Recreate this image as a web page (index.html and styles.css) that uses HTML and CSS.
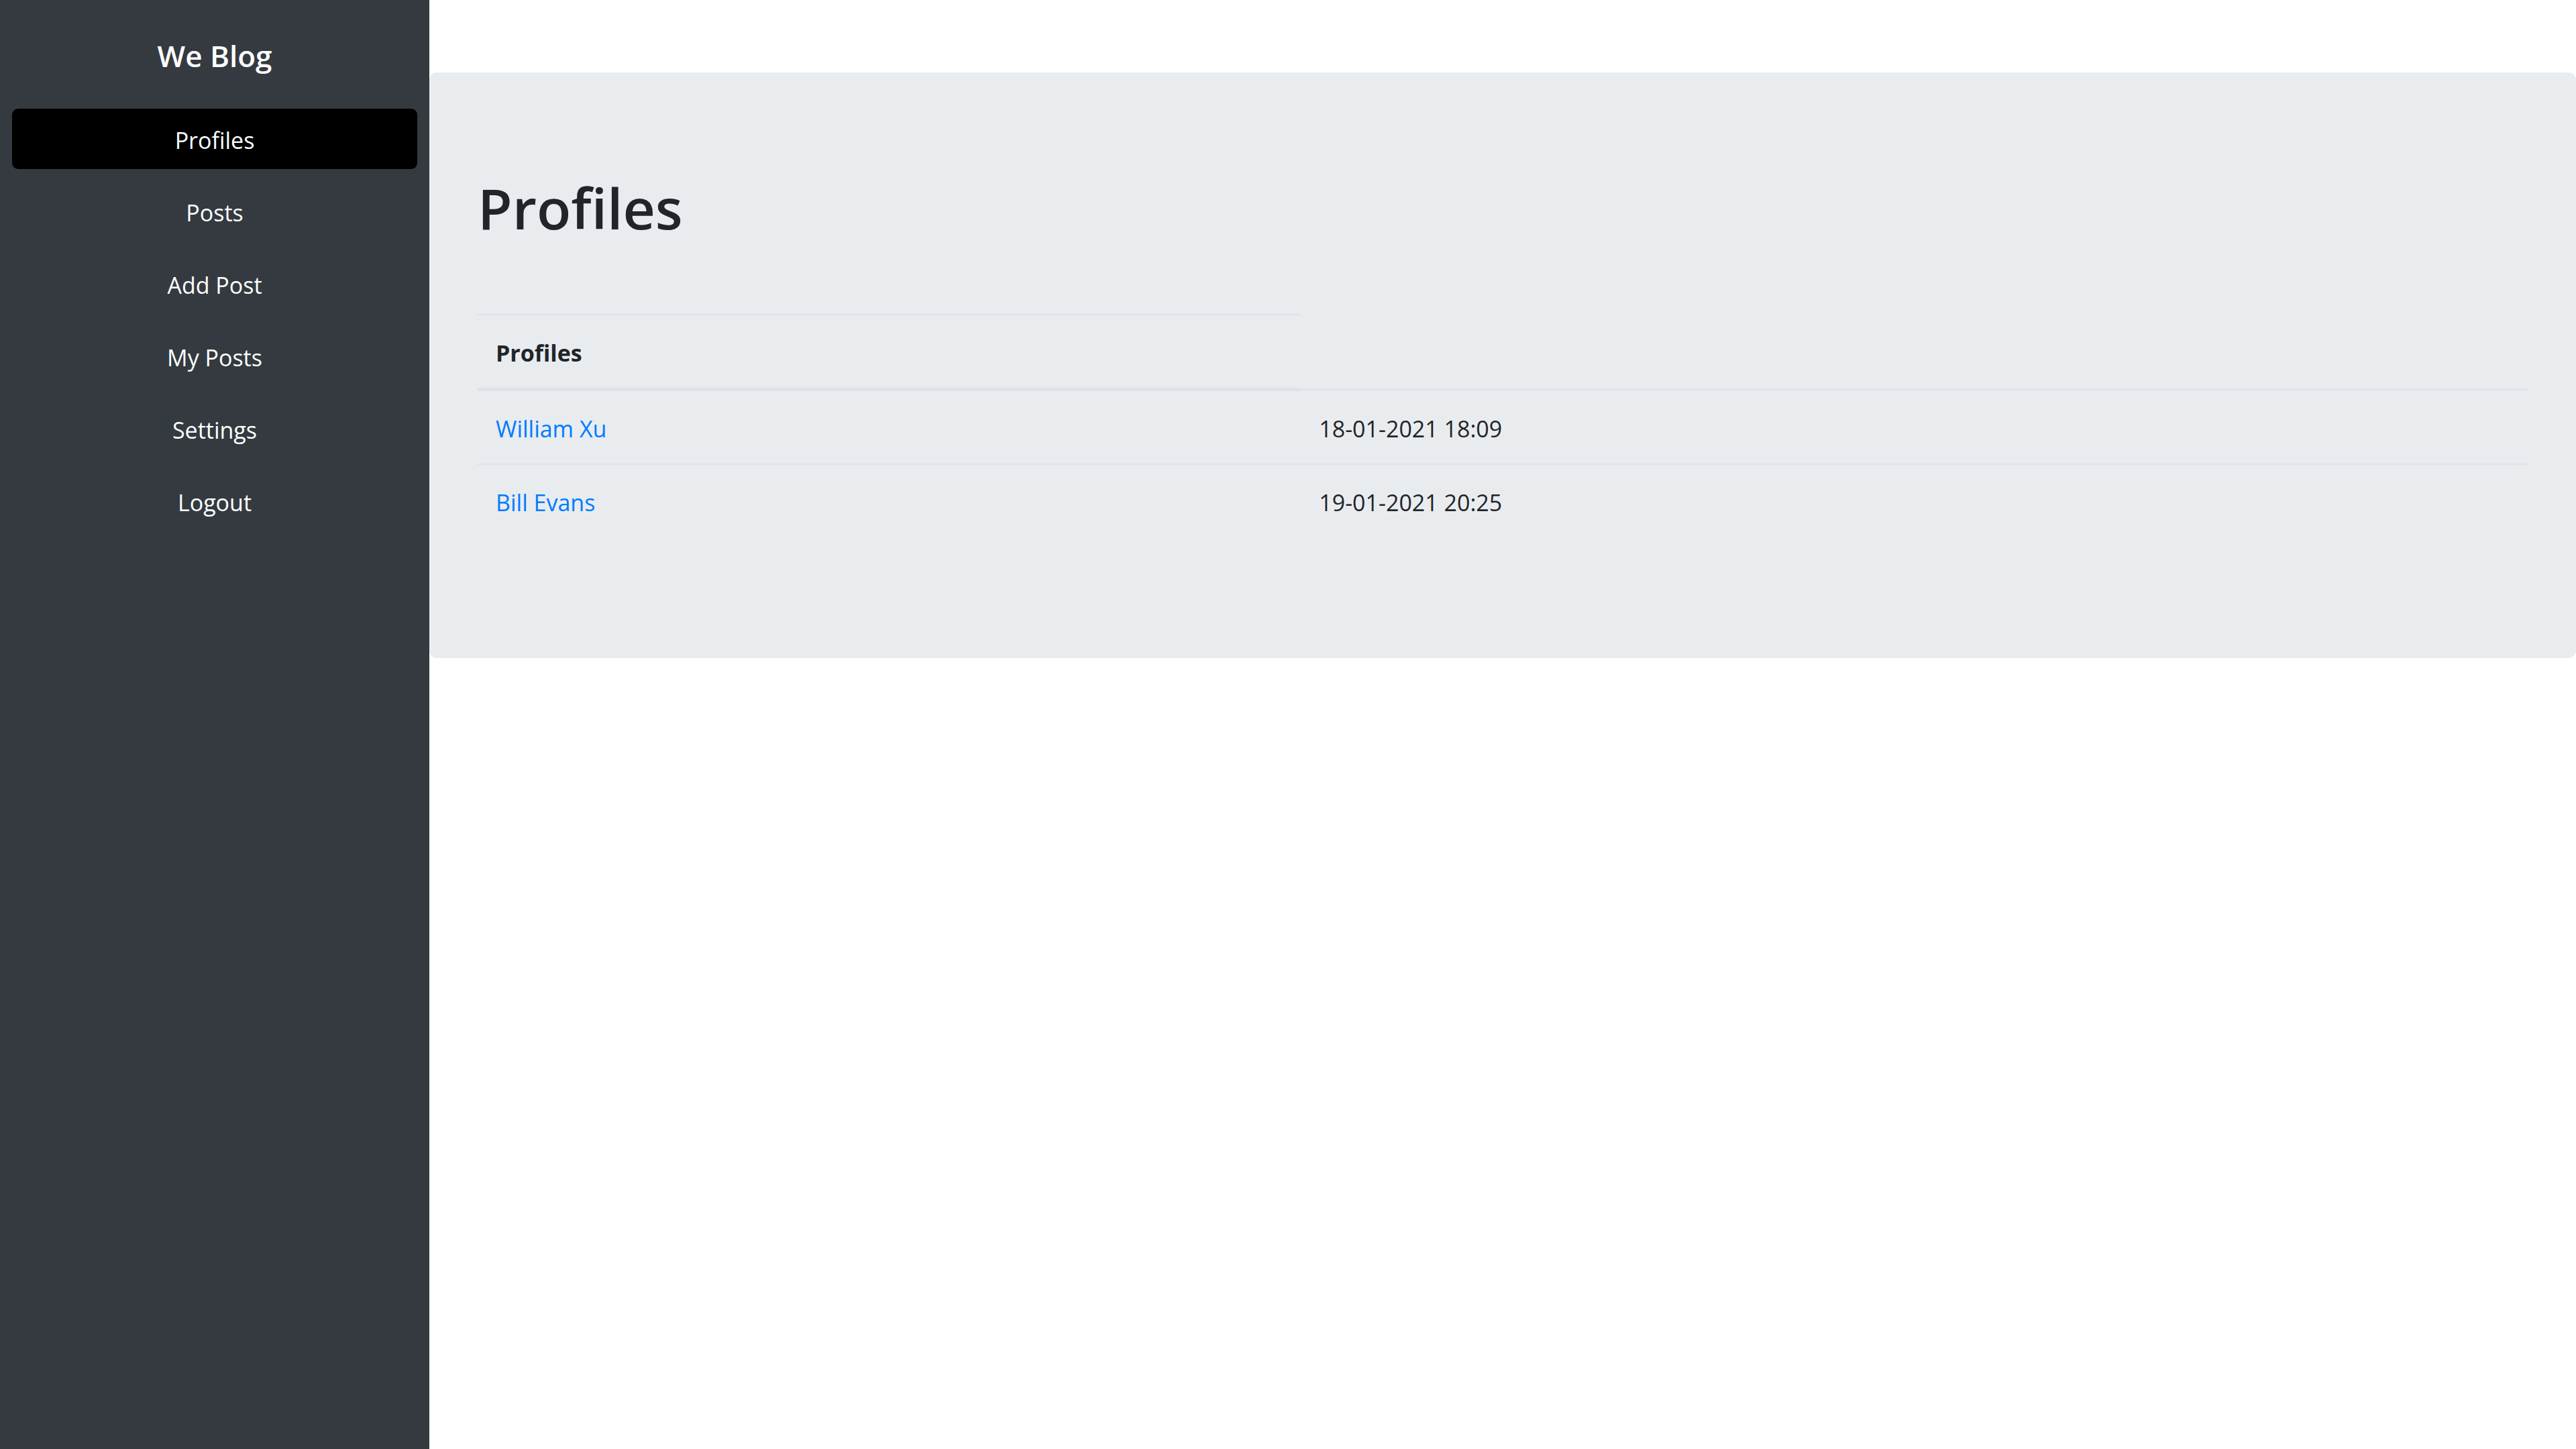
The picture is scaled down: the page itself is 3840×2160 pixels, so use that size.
FILE: index.html
```html
<!DOCTYPE html>
<html lang="en">
<head>
<meta charset="utf-8">
<meta name="viewport" content="width=device-width, initial-scale=1">
<title>We Blog</title>
<link rel="stylesheet" href="styles.css">
</head>
<body>
<div class="layout">
  <aside class="sidebar">
    <a class="brand" href="#">We Blog</a>
    <nav class="menu">
      <a class="menu-link active" href="#" aria-current="page">Profiles</a>
      <a class="menu-link" href="#">Posts</a>
      <a class="menu-link" href="#">Add Post</a>
      <a class="menu-link" href="#">My Posts</a>
      <a class="menu-link" href="#">Settings</a>
      <a class="menu-link" href="#">Logout</a>
    </nav>
  </aside>
  <main class="content">
    <section class="panel">
      <h1 class="panel-title">Profiles</h1>
      <table class="profiles">
        <thead>
          <tr><th class="name-col" scope="col">Profiles</th></tr>
        </thead>
        <tbody>
          <tr><td><a href="#">William Xu</a></td><td>18-01-2021 18:09</td></tr>
          <tr><td><a href="#">Bill Evans</a></td><td>19-01-2021 20:25</td></tr>
        </tbody>
      </table>
    </section>
  </main>
</div>
</body>
</html>
```
FILE: styles.css
```css
* { box-sizing: border-box; }

body {
  margin: 0;
  background: #fff;
  color: #212529;
  font-family: "Segoe UI", "Open Sans", "Noto Sans", sans-serif;
  font-size: 34px;
  line-height: 54px;
}

a { color: #007bff; text-decoration: none; }

.layout {
  display: grid;
  grid-template-columns: 1fr 5fr;
  min-height: 100vh;
}

.sidebar {
  padding: 0 18px;
  background: #343a40;
  text-align: center;
}

.brand {
  display: block;
  padding: 56px 0 52px;
  color: #fff;
  font-size: 44px;
  font-weight: 600;
}

.menu {
  display: flex;
  flex-direction: column;
  gap: 18px;
}

.menu-link {
  padding: 20px 0 16px;
  border-radius: 9px;
  color: #fff;
}

.menu-link.active { background: #000; }

.content { padding-top: 108px; }

.panel {
  padding: 148px 72px 180px;
  border-radius: 11px;
  background: #e9ecef;
}

.panel-title {
  margin: 0 0 104px;
  font-size: 84px;
  font-weight: 600;
  line-height: 108px;
}

.profiles {
  width: 100%;
  border-collapse: collapse;
}

.profiles th,
.profiles td {
  padding: 29px 27px 25px;
  border-top: 2px solid #dee2e6;
  text-align: left;
}

.profiles .name-col {
  width: calc(40% + 4px);
  border-bottom: 5px solid #dee2e6;
}

.profiles tbody tr:first-child td { border-top-width: 3px; }
```
